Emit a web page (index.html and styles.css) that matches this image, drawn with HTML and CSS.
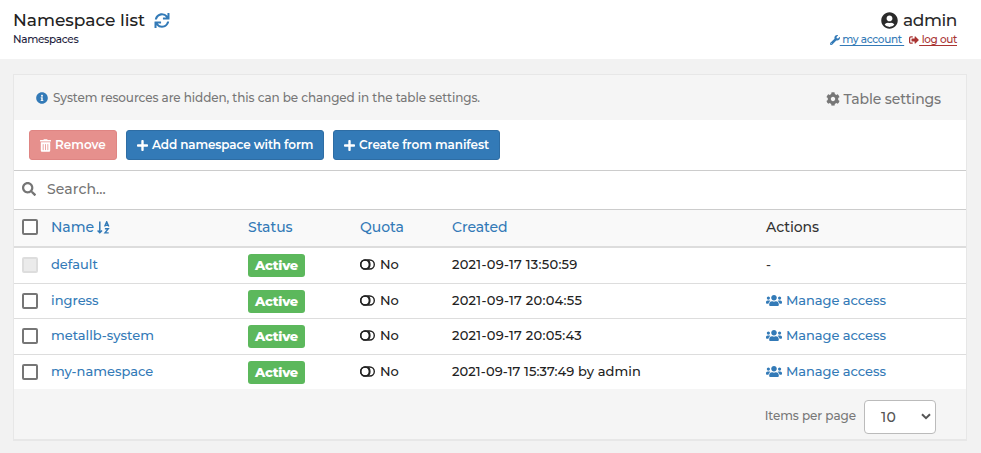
FILE: index.html
```html
<!DOCTYPE html>
<html lang="en">
<head>
<meta charset="utf-8">
<title>Namespace list</title>
<link rel="stylesheet" href="styles.css">
</head>
<body>
<svg class="sprite" aria-hidden="true">
  <symbol id="sync" viewBox="0 0 512 512"><path d="M440.65 12.57l4 82.77A247.16 247.16 0 0 0 255.83 8C134.73 8 33.91 94.92 12.29 209.82A12 12 0 0 0 24.09 224h49.05a12 12 0 0 0 11.67-9.26 175.91 175.91 0 0 1 317-56.94l-101.46-4.86a12 12 0 0 0-12.57 12v47.41a12 12 0 0 0 12 12H500a12 12 0 0 0 12-12V12a12 12 0 0 0-12-12h-47.37a12 12 0 0 0-11.98 12.57zM255.83 432a175.61 175.61 0 0 1-146-77.8l101.8 4.87a12 12 0 0 0 12.57-12v-47.4a12 12 0 0 0-12-12H12a12 12 0 0 0-12 12V500a12 12 0 0 0 12 12h47.35a12 12 0 0 0 12-12.6l-4.15-82.57A247.17 247.17 0 0 0 255.83 504c121.11 0 221.93-86.92 243.55-201.82a12 12 0 0 0-11.8-14.18h-49.05a12 12 0 0 0-11.67 9.26A175.86 175.86 0 0 1 255.83 432z"/></symbol>
  <symbol id="user" viewBox="0 0 496 512"><path d="M248 8C111 8 0 119 0 256s111 248 248 248 248-111 248-248S385 8 248 8zm0 96c48.6 0 88 39.4 88 88s-39.4 88-88 88-88-39.4-88-88 39.4-88 88-88zm0 344c-58.7 0-111.3-26.6-146.5-68.2 18.8-35.4 55.6-59.8 98.5-59.8 2.4 0 4.8.4 7.1 1.1 13 4.2 26.6 6.9 40.9 6.9 14.3 0 28-2.7 40.9-6.9 2.3-.7 4.7-1.1 7.1-1.1 42.9 0 79.7 24.4 98.5 59.8C359.3 421.4 306.7 448 248 448z"/></symbol>
  <symbol id="wrench" viewBox="0 0 512 512"><path d="M507.73 109.1c-2.24-9.03-13.54-12.09-20.12-5.51l-74.36 74.36-67.88-11.31-11.31-67.88 74.36-74.36c6.62-6.62 3.43-17.9-5.66-20.16-47.38-11.74-99.55.91-136.58 37.93-39.64 39.64-50.55 97.1-34.05 147.2L18.74 402.76c-24.99 24.99-24.99 65.51 0 90.5 24.99 24.99 65.51 24.99 90.5 0l213.21-213.21c50.12 16.71 107.47 5.68 147.37-34.22 37.07-37.07 49.7-89.32 37.91-136.73zM64 472c-13.25 0-24-10.75-24-24 0-13.26 10.75-24 24-24s24 10.74 24 24c0 13.25-10.75 24-24 24z"/></symbol>
  <symbol id="exit" viewBox="0 0 512 512"><path d="M497 273L329 441c-15 15-41 4.5-41-17v-96H152c-13.3 0-24-10.7-24-24v-96c0-13.3 10.7-24 24-24h136V88c0-21.4 25.9-32 41-17l168 168c9.3 9.4 9.3 24.6 0 34zM192 436v-40c0-6.6-5.4-12-12-12H96c-17.7 0-32-14.3-32-32V160c0-17.7 14.3-32 32-32h84c6.6 0 12-5.4 12-12V76c0-6.6-5.4-12-12-12H96c-53 0-96 43-96 96v192c0 53 43 96 96 96h84c6.6 0 12-5.4 12-12z"/></symbol>
  <symbol id="info" viewBox="0 0 512 512"><path d="M256 8C119.043 8 8 119.083 8 256c0 136.997 111.043 248 248 248s248-111.003 248-248C504 119.083 392.957 8 256 8zm0 110c23.196 0 42 18.804 42 42s-18.804 42-42 42-42-18.804-42-42 18.804-42 42-42zm56 254c0 6.627-5.373 12-12 12h-88c-6.627 0-12-5.373-12-12v-24c0-6.627 5.373-12 12-12h12v-64h-12c-6.627 0-12-5.373-12-12v-24c0-6.627 5.373-12 12-12h64c6.627 0 12 5.373 12 12v100h12c6.627 0 12 5.373 12 12v24z"/></symbol>
  <symbol id="cog" viewBox="0 0 512 512"><path d="M487.4 315.7l-42.6-24.6c4.3-23.2 4.3-47 0-70.2l42.6-24.6c4.9-2.8 7.1-8.6 5.5-14-11.1-35.6-30-67.8-54.7-94.6-3.8-4.1-10-5.1-14.8-2.3L380.8 110c-17.9-15.4-38.5-27.3-60.8-35.1V25.8c0-5.6-3.9-10.5-9.4-11.7-36.7-8.2-74.3-7.8-109.2 0-5.5 1.2-9.4 6.1-9.4 11.7V75c-22.2 7.9-42.8 19.8-60.8 35.1L88.7 85.5c-4.9-2.8-11-1.9-14.8 2.3-24.7 26.7-43.6 58.9-54.7 94.6-1.7 5.4.6 11.2 5.5 14L67.3 221c-4.3 23.2-4.3 47 0 70.2l-42.6 24.6c-4.9 2.8-7.1 8.6-5.5 14 11.1 35.6 30 67.8 54.7 94.6 3.8 4.1 10 5.1 14.8 2.3l42.6-24.6c17.9 15.4 38.5 27.3 60.8 35.1v49.2c0 5.6 3.9 10.5 9.4 11.7 36.7 8.2 74.3 7.8 109.2 0 5.5-1.2 9.4-6.1 9.4-11.7v-49.2c22.2-7.9 42.8-19.8 60.8-35.1l42.6 24.6c4.9 2.8 11 1.9 14.8-2.3 24.7-26.7 43.6-58.9 54.7-94.6 1.5-5.5-.7-11.3-5.6-14.1zM256 336c-44.1 0-80-35.9-80-80s35.9-80 80-80 80 35.9 80 80-35.9 80-80 80z"/></symbol>
  <symbol id="trash" viewBox="0 0 448 512"><path d="M32 464a48 48 0 0 0 48 48h288a48 48 0 0 0 48-48V128H32zm272-256a16 16 0 0 1 32 0v224a16 16 0 0 1-32 0zm-96 0a16 16 0 0 1 32 0v224a16 16 0 0 1-32 0zm-96 0a16 16 0 0 1 32 0v224a16 16 0 0 1-32 0zM432 32H312l-9.4-18.7A24 24 0 0 0 281.1 0H166.8a23.72 23.72 0 0 0-21.4 13.3L136 32H16A16 16 0 0 0 0 48v32a16 16 0 0 0 16 16h416a16 16 0 0 0 16-16V48a16 16 0 0 0-16-16z"/></symbol>
  <symbol id="plus" viewBox="0 0 448 512"><path d="M416 208H272V64c0-17.67-14.33-32-32-32h-32c-17.67 0-32 14.33-32 32v144H32c-17.67 0-32 14.33-32 32v32c0 17.67 14.33 32 32 32h144v144c0 17.67 14.33 32 32 32h32c17.67 0 32-14.33 32-32V304h144c17.67 0 32-14.33 32-32v-32c0-17.67-14.33-32-32-32z"/></symbol>
  <symbol id="search" viewBox="0 0 512 512"><path d="M505 442.7L405.3 343c-4.5-4.5-10.6-7-17-7H372c27.6-35.3 44-79.7 44-128C416 93.1 322.9 0 208 0S0 93.1 0 208s93.1 208 208 208c48.3 0 92.7-16.4 128-44v16.3c0 6.4 2.5 12.5 7 17l99.7 99.7c9.4 9.4 24.6 9.4 33.9 0l28.3-28.3c9.4-9.4 9.4-24.6.1-34zM208 336c-70.7 0-128-57.2-128-128 0-70.7 57.2-128 128-128 70.7 0 128 57.2 128 128 0 70.7-57.2 128-128 128z"/></symbol>
  <symbol id="users" viewBox="0 0 640 512"><path d="M96 224c35.3 0 64-28.7 64-64s-28.7-64-64-64-64 28.7-64 64 28.7 64 64 64zm448 0c35.3 0 64-28.7 64-64s-28.7-64-64-64-64 28.7-64 64 28.7 64 64 64zm32 32h-64c-17.6 0-33.5 7.1-45.1 18.6 40.3 22.1 68.9 62 75.1 109.4h66c17.7 0 32-14.3 32-32v-32c0-35.3-28.7-64-64-64zm-256 0c61.9 0 112-50.1 112-112S381.9 32 320 32 208 82.1 208 144s50.1 112 112 112zm76.8 32h-8.3c-20.8 10-43.9 16-68.5 16s-47.6-6-68.5-16h-8.3C179.6 288 128 339.6 128 403.2V432c0 26.5 21.5 48 48 48h288c26.5 0 48-21.5 48-48v-28.8c0-63.6-51.6-115.2-115.2-115.2zm-223.7-13.4C161.5 263.1 145.6 256 128 256H64c-35.3 0-64 28.7-64 64v32c0 17.7 14.3 32 32 32h65.9c6.3-47.4 34.9-87.3 75.2-109.4z"/></symbol>
  <symbol id="sort" viewBox="0 0 13 13"><g fill="none" stroke="currentColor"><path stroke-width="1.5" d="M2.8.5v11.2M.6 9.4l2.2 2.3L5 9.4"/><path stroke-width="1.4" d="M7.6 5.5L9.7.8l2.1 4.7M8.3 4.3h2.9M7.9 7.7h3.4L8 11.9h3.7"/></g></symbol>
  <symbol id="toggle" viewBox="0 0 15 11"><g fill="none" stroke="currentColor" stroke-width="1.4"><rect x=".7" y="1" width="13.6" height="9" rx="4.5"/><ellipse cx="5" cy="5.5" rx="4.3" ry="4.5"/><path d="M7.5 1.2c3.2 1.4 3.2 7.2 0 8.6"/></g></symbol>
</svg>

<header class="top">
  <div>
    <h1 class="title">Namespace list <svg class="i-sync"><use href="#sync"/></svg></h1>
    <div class="crumb">Namespaces</div>
  </div>
  <div class="account">
    <div class="who"><svg class="i-user"><use href="#user"/></svg>admin</div>
    <div class="links">
      <a class="link-account"><svg class="i-small"><use href="#wrench"/></svg><span>&nbsp;my account&nbsp;</span></a>
      <a class="link-out"><svg class="i-small"><use href="#exit"/></svg><span>&nbsp;log out</span></a>
    </div>
  </div>
</header>

<main class="panel">
  <div class="notice">
    <div class="notice-text"><svg class="i-info"><use href="#info"/></svg>System resources are hidden, this can be changed in the table settings.</div>
    <div class="settings"><svg class="i-cog"><use href="#cog"/></svg>Table settings</div>
  </div>
  <div class="toolbar">
    <button class="btn remove"><svg class="i-btn"><use href="#trash"/></svg>Remove</button>
    <button class="btn add"><svg class="i-btn"><use href="#plus"/></svg>Add namespace with form</button>
    <button class="btn create"><svg class="i-btn"><use href="#plus"/></svg>Create from manifest</button>
  </div>
  <div class="search"><svg class="i-search"><use href="#search"/></svg>Search...</div>

  <div class="row head">
    <i class="box"></i>
    <a class="h-name">Name <svg class="i-sort"><use href="#sort"/></svg></a>
    <a>Status</a><a>Quota</a><a>Created</a><span>Actions</span>
  </div>
  <div class="row r1">
    <i class="box off"></i><a>default</a><b class="badge">Active</b>
    <span class="quota"><svg class="i-toggle"><use href="#toggle"/></svg>No</span>
    <span class="date">2021-09-17 13:50:59</span><span>-</span>
  </div>
  <div class="row r2">
    <i class="box"></i><a>ingress</a><b class="badge">Active</b>
    <span class="quota"><svg class="i-toggle"><use href="#toggle"/></svg>No</span>
    <span class="date">2021-09-17 20:04:55</span><a class="manage"><svg class="i-users"><use href="#users"/></svg>Manage access</a>
  </div>
  <div class="row r3">
    <i class="box"></i><a>metallb-system</a><b class="badge">Active</b>
    <span class="quota"><svg class="i-toggle"><use href="#toggle"/></svg>No</span>
    <span class="date">2021-09-17 20:05:43</span><a class="manage"><svg class="i-users"><use href="#users"/></svg>Manage access</a>
  </div>
  <div class="row r4">
    <i class="box"></i><a>my-namespace</a><b class="badge">Active</b>
    <span class="quota"><svg class="i-toggle"><use href="#toggle"/></svg>No</span>
    <span class="date by">2021-09-17 15:37:49 by admin</span><a class="manage"><svg class="i-users"><use href="#users"/></svg>Manage access</a>
  </div>
  <footer class="foot">
    <span>Items per page</span>
    <div class="select">10<svg class="i-chev" viewBox="0 0 10 7"><path d="M1 1.2l4 4 4-4" fill="none" stroke="currentColor" stroke-width="2"/></svg></div>
  </footer>
</main>
</body>
</html>
```
FILE: styles.css
```css
* { box-sizing: border-box; }
body { margin: 0; height: 453px; overflow: hidden; background: #f2f2f2; color: #333; font: 500 13px/18px Montserrat, Inter, sans-serif; white-space: nowrap; }
svg { fill: currentColor; flex: none; }
.sprite { display: none; }
a { color: #337ab7; }

.top { height: 59px; padding: 9px 24px 0 13px; background: #fff; display: flex; justify-content: space-between; }
.title { margin: 0; display: flex; align-items: center; height: 22px; font-size: 17px; font-weight: 500; color: #222; }
.i-sync { width: 16px; height: 15px; margin-left: 9px; color: #337ab7; }
.crumb { font-size: 10.5px; line-height: 17px; letter-spacing: -.32px; color: #1c1c3c; }
.account { display: flex; flex-direction: column; align-items: flex-end; }
.who { display: flex; align-items: center; height: 22px; font-size: 17px; letter-spacing: -.4px; color: #2b2b2b; }
.i-user { width: 17px; height: 17px; margin-right: 5px; }
.links { display: flex; gap: 5px; font-size: 10.5px; line-height: 17px; letter-spacing: -.35px; }
.links a { display: flex; align-items: center; }
.links span { text-decoration: underline; text-underline-offset: 2px; }
.i-small { width: 10px; height: 10px; }
.links .link-out { color: #a93432; }

.panel { margin: 15px 14px 0 13px; height: 367px; border: 1px solid #e7e7e7; border-bottom-width: 2px; background: #fff; }
.notice { height: 45px; padding: 0 25px 0 22px; background: #f5f5f5; color: #777; display: flex; justify-content: space-between; align-items: center; }
.notice-text { display: flex; align-items: center; font-size: 12px; letter-spacing: -.09px; }
.i-info { width: 12px; height: 12px; margin-right: 5px; color: #337ab7; }
.settings { display: flex; align-items: center; font-size: 14px; letter-spacing: -.12px; padding-top: 3px; }
.i-cog { width: 14px; height: 14px; margin-right: 4px; }

.toolbar { height: 50px; padding-left: 15px; display: flex; align-items: center; gap: 9px; }
.btn { height: 30px; padding: 0 0 0 10px; display: flex; align-items: center; border: 1px solid #2e6da4; border-radius: 3px; background: #337ab7; color: #fff; font: 600 12px/18px Montserrat, Inter, sans-serif; white-space: nowrap; }
.i-btn { width: 11px; height: 13px; margin-right: 4px; }
.remove { width: 88px; background: #e6908d; border-color: #df8583; }
.add { width: 198px; letter-spacing: -.14px; }
.create { width: 167px; letter-spacing: -.07px; }

.search { height: 40px; padding: 0 0 2px 8px; border: solid #ccc; border-width: 1px 0; display: flex; align-items: center; color: #757575; font-size: 14px; letter-spacing: .1px; }
.i-search { width: 14px; height: 14px; margin-right: 11px; }

.row { display: grid; grid-template-columns: 29px 197px 112px 92px 314px 1fr; padding-left: 8px; align-items: center; border-bottom: 1px solid #ddd; }
.row > a, .row > span { padding-bottom: 2px; }
.head { height: 38px; padding-bottom: 2px; border-bottom-width: 2px; background: #f9f9f9; font-size: 14px; }
.head > a, .head > span { padding-bottom: 0; letter-spacing: -.05px; }
.h-name { display: flex; align-items: center; }
.i-sort { width: 13px; height: 13px; margin-left: 3px; }
.r1 { height: 36px; padding-bottom: 1px; }
.r2 { height: 35px; }
.r3 { height: 36px; padding-bottom: 1px; }
.r4 { height: 34px; border-bottom: 0; }
.box { width: 16px; height: 16px; border: 2px solid #767676; border-radius: 2px; background: #fff; }
.off { border-color: #ddd; background: #ebebeb; }
.badge { justify-self: start; width: 57px; height: 23px; line-height: 22px; text-align: center; border-radius: 3px; background: #5cb85c; color: #fff; font-weight: 800; letter-spacing: -.2px; }
.quota { display: flex; align-items: center; color: #222; }
.i-toggle { width: 15px; height: 11px; margin-right: 5px; }
.date { letter-spacing: .25px; color: #222; }
.by { letter-spacing: .09px; }
.manage { display: flex; align-items: center; letter-spacing: -.06px; }
.i-users { width: 16px; height: 13px; margin-right: 4px; }

.foot { height: 50px; padding-right: 30px; background: #f5f5f5; display: flex; justify-content: flex-end; align-items: center; gap: 8px; color: #777; font-size: 12px; letter-spacing: -.07px; }
.foot > span { padding-top: 3px; }
.select { width: 72px; height: 34px; margin-top: 5px; padding: 0 4px 0 16px; border: 1px solid #bbb; border-radius: 4px; background: #fff; color: #555; font-size: 14px; letter-spacing: .3px; display: flex; align-items: center; justify-content: space-between; }
.i-chev { width: 10px; height: 7px; }
.panel { height: auto; }
```
